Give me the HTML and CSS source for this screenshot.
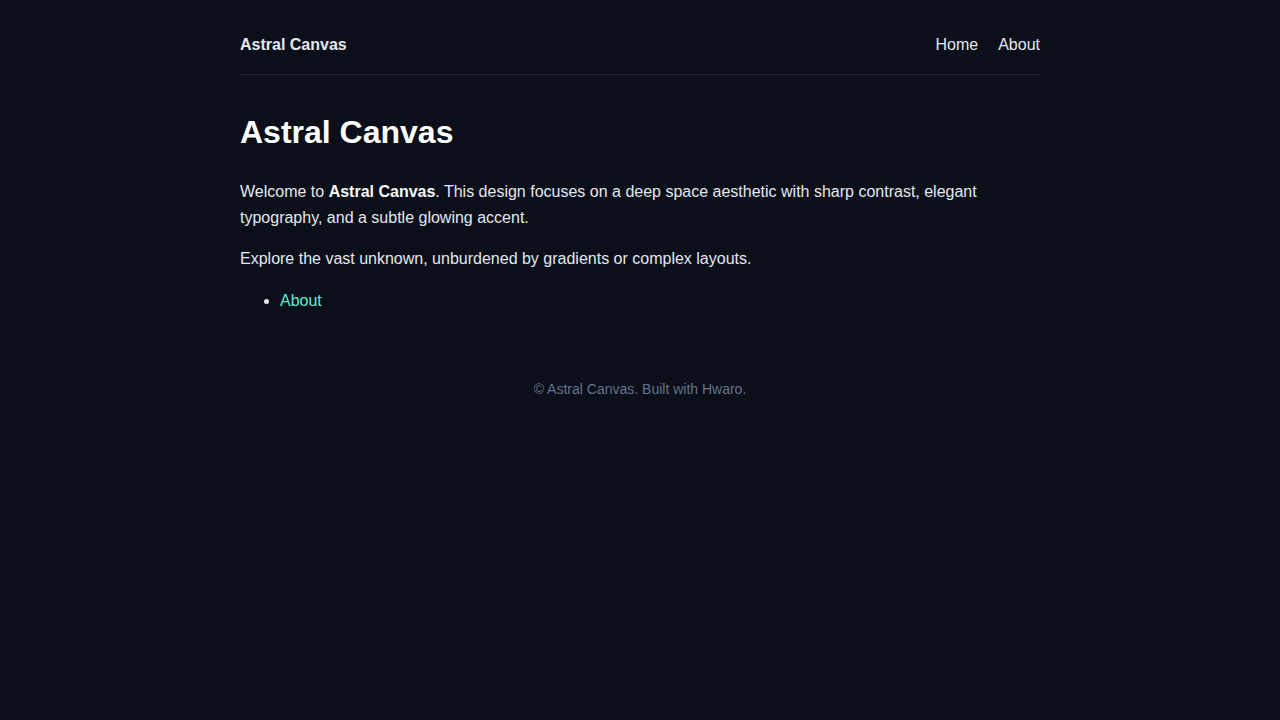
FILE: index.html
```html
<!DOCTYPE html>
<html lang="en">
<head>
<meta charset="utf-8">
<title>Astral Canvas</title>
<link rel="stylesheet" href="styles.css">
</head>
<body>
<div class="container">
  <header class="site-header">
    <a class="brand" href="#">Astral Canvas</a>
    <nav class="nav">
      <a href="#">Home</a>
      <a href="#">About</a>
    </nav>
  </header>
  <main class="content">
    <h1>Astral Canvas</h1>
    <p class="intro">Welcome to <strong>Astral Canvas</strong>. This design focuses on a deep space aesthetic with sharp contrast, elegant typography, and a subtle glowing accent.</p>
    <p>Explore the vast unknown, unburdened by gradients or complex layouts.</p>
    <ul class="links">
      <li><a href="#">About</a></li>
    </ul>
  </main>
  <footer class="site-footer">© Astral Canvas. Built with Hwaro.</footer>
</div>
</body>
</html>
```
FILE: styles.css
```css
html, body {
  margin: 0;
  padding: 0;
  background: #0b0f19;
}
body {
  color: #e2e8f0;
  font-family: "Liberation Sans", Arial, sans-serif;
  font-size: 16px;
  line-height: 26px;
}
.container {
  width: 800px;
  margin: 0 auto;
}
.site-header {
  display: flex;
  justify-content: space-between;
  align-items: center;
  padding: 33px 0 17px;
  line-height: 24px;
  border-bottom: 1px solid #1e293b;
}
.brand {
  color: #e2e8f0;
  font-weight: bold;
  text-decoration: none;
}
.nav {
  display: flex;
  gap: 20px;
}
.nav a {
  color: #e2e8f0;
  text-decoration: none;
}
.content h1 {
  font-size: 32px;
  line-height: 38px;
  margin: 38px 0 28px;
  color: #ffffff;
}
.content p {
  margin: 0 0 16px;
}
.content .intro {
  margin-bottom: 15px;
}
.content strong {
  color: #f8fafc;
}
.links {
  margin: 0;
  padding-left: 40px;
}
.links a {
  color: #5eead4;
  text-decoration: none;
}
.site-footer {
  margin-top: 65px;
  text-align: center;
  color: #64748b;
  font-size: 14px;
  line-height: 21px;
}
```
